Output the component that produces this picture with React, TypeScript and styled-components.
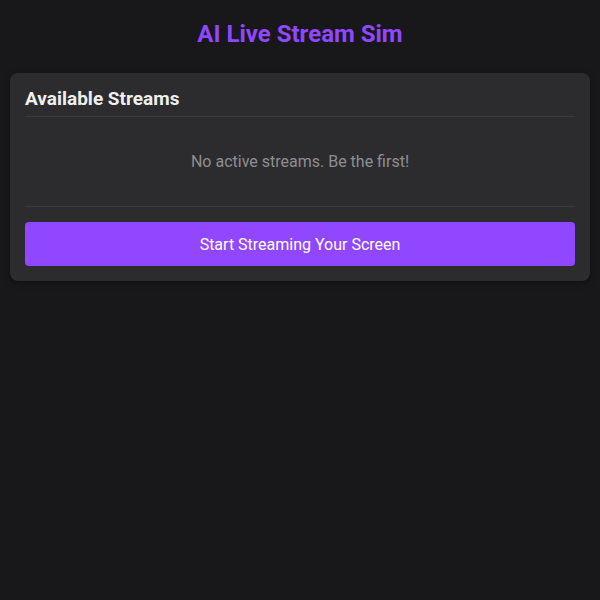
import React from "react";
import styled, { createGlobalStyle } from "styled-components";

const Global = createGlobalStyle`
  html, body {
    margin: 0;
    padding: 0;
    background: #18181b;
    height: 100%;
  }
  body {
    font-family: Roboto, "Liberation Sans", sans-serif;
    color: #efeff1;
  }
`;

const Page = styled.div`
  min-height: 600px;
  background: #18181b;
  padding: 10px;
  box-sizing: border-box;
  display: flex;
  flex-direction: column;
`;

const Title = styled.h1`
  margin: 10px 0 25px;
  text-align: center;
  color: #9147ff;
  font-size: 24px;
  font-weight: 700;
  line-height: 28px;
`;

const Card = styled.section`
  background: #2c2c2f;
  border-radius: 8px;
  padding: 15px;
  box-shadow: 0 2px 6px rgba(0, 0, 0, 0.35);
  display: flex;
  flex-direction: column;
`;

const CardTitle = styled.h2`
  margin: 0;
  font-size: 19px;
  font-weight: 700;
  line-height: 22px;
  color: #efeff1;
  padding-bottom: 6px;
  border-bottom: 1px solid #3d3d41;
`;

const Empty = styled.p`
  margin: 0;
  padding: 35px 0 34px;
  text-align: center;
  color: #8e8e93;
  font-size: 16px;
  line-height: 20px;
  border-bottom: 1px solid #3d3d41;
`;

const Button = styled.button`
  margin-top: 15px;
  height: 44px;
  border: none;
  border-radius: 4px;
  background: #9147ff;
  color: #ffffff;
  font-family: Roboto, "Liberation Sans", sans-serif;
  font-size: 16px;
  cursor: pointer;
`;

export default function App() {
  return (
    <>
      <Global />
      <Page>
        <Title>AI Live Stream Sim</Title>
        <Card>
          <CardTitle>Available Streams</CardTitle>
          <Empty>No active streams. Be the first!</Empty>
          <Button>Start Streaming Your Screen</Button>
        </Card>
      </Page>
    </>
  );
}
